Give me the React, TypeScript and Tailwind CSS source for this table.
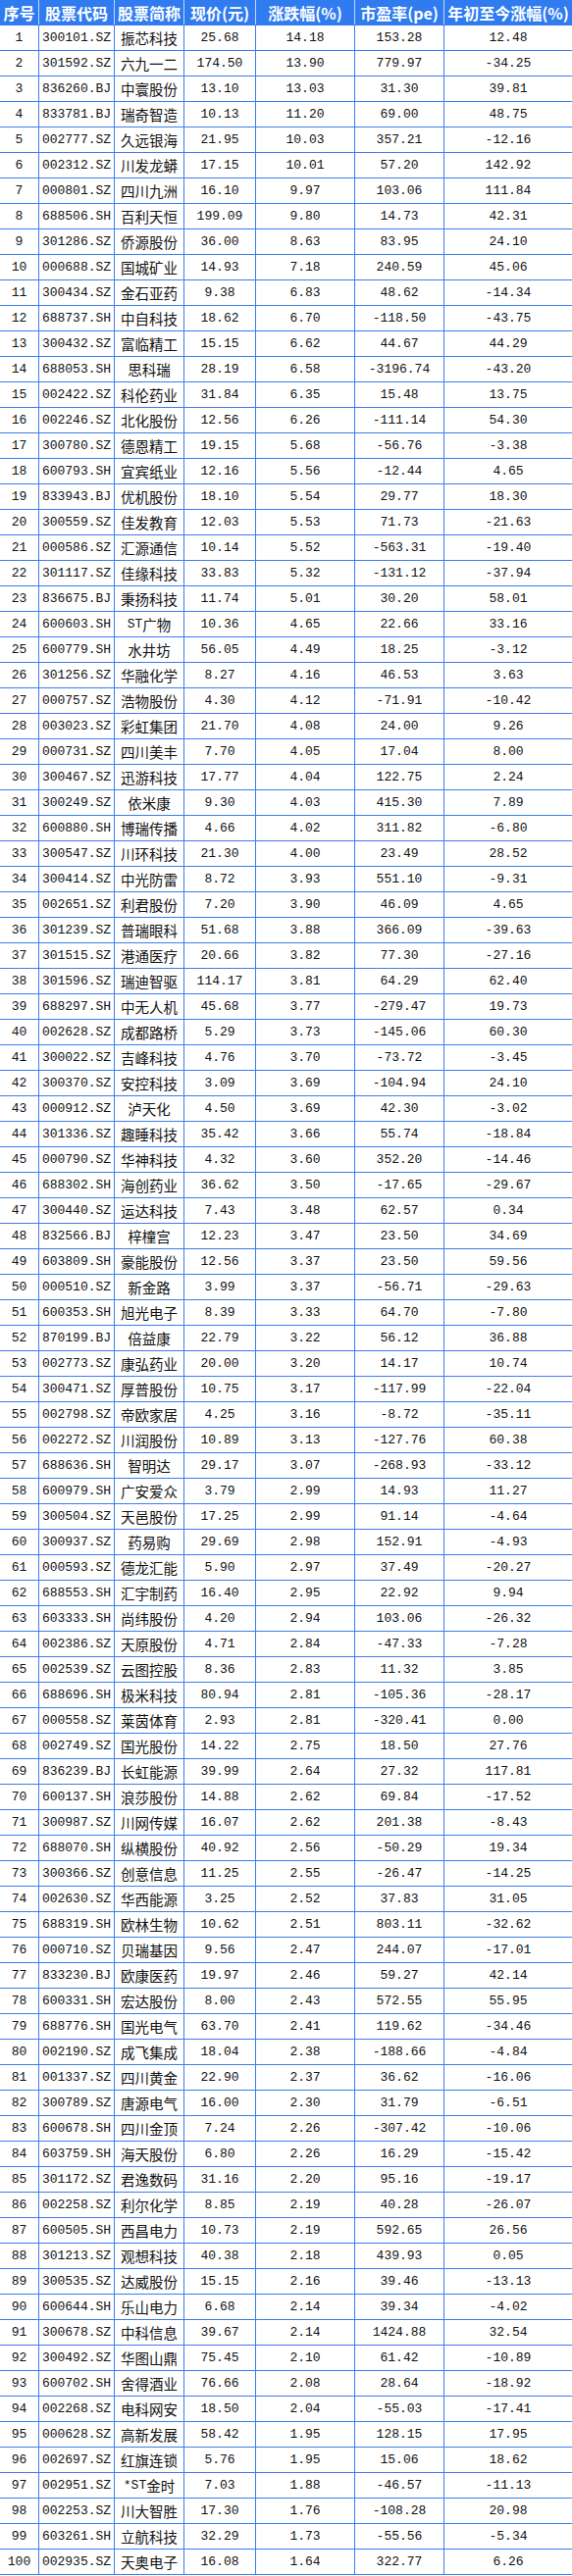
import React from "react";

// code|name|price|chg|pe|ytd
const raw = `300101.SZ|振芯科技|25.68|14.18|153.28|12.48
301592.SZ|六九一二|174.50|13.90|779.97|-34.25
836260.BJ|中寰股份|13.10|13.03|31.30|39.81
833781.BJ|瑞奇智造|10.13|11.20|69.00|48.75
002777.SZ|久远银海|21.95|10.03|357.21|-12.16
002312.SZ|川发龙蟒|17.15|10.01|57.20|142.92
000801.SZ|四川九洲|16.10|9.97|103.06|111.84
688506.SH|百利天恒|199.09|9.80|14.73|42.31
301286.SZ|侨源股份|36.00|8.63|83.95|24.10
000688.SZ|国城矿业|14.93|7.18|240.59|45.06
300434.SZ|金石亚药|9.38|6.83|48.62|-14.34
688737.SH|中自科技|18.62|6.70|-118.50|-43.75
300432.SZ|富临精工|15.15|6.62|44.67|44.29
688053.SH|思科瑞|28.19|6.58|-3196.74|-43.20
002422.SZ|科伦药业|31.84|6.35|15.48|13.75
002246.SZ|北化股份|12.56|6.26|-111.14|54.30
300780.SZ|德恩精工|19.15|5.68|-56.76|-3.38
600793.SH|宜宾纸业|12.16|5.56|-12.44|4.65
833943.BJ|优机股份|18.10|5.54|29.77|18.30
300559.SZ|佳发教育|12.03|5.53|71.73|-21.63
000586.SZ|汇源通信|10.14|5.52|-563.31|-19.40
301117.SZ|佳缘科技|33.83|5.32|-131.12|-37.94
836675.BJ|秉扬科技|11.74|5.01|30.20|58.01
600603.SH|ST广物|10.36|4.65|22.66|33.16
600779.SH|水井坊|56.05|4.49|18.25|-3.12
301256.SZ|华融化学|8.27|4.16|46.53|3.63
000757.SZ|浩物股份|4.30|4.12|-71.91|-10.42
003023.SZ|彩虹集团|21.70|4.08|24.00|9.26
000731.SZ|四川美丰|7.70|4.05|17.04|8.00
300467.SZ|迅游科技|17.77|4.04|122.75|2.24
300249.SZ|依米康|9.30|4.03|415.30|7.89
600880.SH|博瑞传播|4.66|4.02|311.82|-6.80
300547.SZ|川环科技|21.30|4.00|23.49|28.52
300414.SZ|中光防雷|8.72|3.93|551.10|-9.31
002651.SZ|利君股份|7.20|3.90|46.09|4.65
301239.SZ|普瑞眼科|51.68|3.88|366.09|-39.63
301515.SZ|港通医疗|20.66|3.82|77.30|-27.16
301596.SZ|瑞迪智驱|114.17|3.81|64.29|62.40
688297.SH|中无人机|45.68|3.77|-279.47|19.73
002628.SZ|成都路桥|5.29|3.73|-145.06|60.30
300022.SZ|吉峰科技|4.76|3.70|-73.72|-3.45
300370.SZ|安控科技|3.09|3.69|-104.94|24.10
000912.SZ|泸天化|4.50|3.69|42.30|-3.02
301336.SZ|趣睡科技|35.42|3.66|55.74|-18.84
000790.SZ|华神科技|4.32|3.60|352.20|-14.46
688302.SH|海创药业|36.62|3.50|-17.65|-29.67
300440.SZ|运达科技|7.43|3.48|62.57|0.34
832566.BJ|梓橦宫|12.23|3.47|23.50|34.69
603809.SH|豪能股份|12.56|3.37|23.50|59.56
000510.SZ|新金路|3.99|3.37|-56.71|-29.63
600353.SH|旭光电子|8.39|3.33|64.70|-7.80
870199.BJ|倍益康|22.79|3.22|56.12|36.88
002773.SZ|康弘药业|20.00|3.20|14.17|10.74
300471.SZ|厚普股份|10.75|3.17|-117.99|-22.04
002798.SZ|帝欧家居|4.25|3.16|-8.72|-35.11
002272.SZ|川润股份|10.89|3.13|-127.76|60.38
688636.SH|智明达|29.17|3.07|-268.93|-33.12
600979.SH|广安爱众|3.79|2.99|14.93|11.27
300504.SZ|天邑股份|17.25|2.99|91.14|-4.64
300937.SZ|药易购|29.69|2.98|152.91|-4.93
000593.SZ|德龙汇能|5.90|2.97|37.49|-20.27
688553.SH|汇宇制药|16.40|2.95|22.92|9.94
603333.SH|尚纬股份|4.20|2.94|103.06|-26.32
002386.SZ|天原股份|4.71|2.84|-47.33|-7.28
002539.SZ|云图控股|8.36|2.83|11.32|3.85
688696.SH|极米科技|80.94|2.81|-105.36|-28.17
000558.SZ|莱茵体育|2.93|2.81|-320.41|0.00
002749.SZ|国光股份|14.22|2.75|18.50|27.76
836239.BJ|长虹能源|39.99|2.64|27.32|117.81
600137.SH|浪莎股份|14.88|2.62|69.84|-17.52
300987.SZ|川网传媒|16.07|2.62|201.38|-8.43
688070.SH|纵横股份|40.92|2.56|-50.29|19.34
300366.SZ|创意信息|11.25|2.55|-26.47|-14.25
002630.SZ|华西能源|3.25|2.52|37.83|31.05
688319.SH|欧林生物|10.62|2.51|803.11|-32.62
000710.SZ|贝瑞基因|9.56|2.47|244.07|-17.01
833230.BJ|欧康医药|19.97|2.46|59.27|42.14
600331.SH|宏达股份|8.00|2.43|572.55|55.95
688776.SH|国光电气|63.70|2.41|119.62|-34.46
002190.SZ|成飞集成|18.04|2.38|-188.66|-4.84
001337.SZ|四川黄金|22.90|2.37|36.62|-16.06
300789.SZ|唐源电气|16.00|2.30|31.79|-6.51
600678.SH|四川金顶|7.24|2.26|-307.42|-10.06
603759.SH|海天股份|6.80|2.26|16.29|-15.42
301172.SZ|君逸数码|31.16|2.20|95.16|-19.17
002258.SZ|利尔化学|8.85|2.19|40.28|-26.07
600505.SH|西昌电力|10.73|2.19|592.65|26.56
301213.SZ|观想科技|40.38|2.18|439.93|0.05
300535.SZ|达威股份|15.15|2.16|39.46|-13.13
600644.SH|乐山电力|6.68|2.14|39.34|-4.02
300678.SZ|中科信息|39.67|2.14|1424.88|32.54
300492.SZ|华图山鼎|75.45|2.10|61.42|-10.89
600702.SH|舍得酒业|76.66|2.08|28.64|-18.92
002268.SZ|电科网安|18.50|2.04|-55.03|-17.41
000628.SZ|高新发展|58.42|1.95|128.15|17.95
002697.SZ|红旗连锁|5.76|1.95|15.06|18.62
002951.SZ|*ST金时|7.03|1.88|-46.57|-11.13
002253.SZ|川大智胜|17.30|1.76|-108.28|20.98
603261.SH|立航科技|32.29|1.73|-55.56|-5.34
002935.SZ|天奥电子|16.08|1.64|322.77|6.26`;

const rows = raw.split("\n").map((line) => line.split("|"));

const headers = ["序号", "股票代码", "股票简称", "现价(元)", "涨跌幅(%)", "市盈率(pe)", "年初至今涨幅(%)"];

const grid = "grid grid-cols-[40px_77px_71px_73px_101px_91px_130px]";
const cell = "flex items-center justify-center border-r border-[#3a7cf0] last:border-r-0 overflow-hidden whitespace-nowrap";
const mono = "font-['Liberation_Mono','Noto_Sans_CJK_SC',monospace] text-[13px]";
const cjk = "font-['Noto_Sans_CJK_SC','Liberation_Sans',sans-serif] text-[14.5px]";

export default function App() {
  return (
    <div className="w-[583px] bg-white text-[#111]">
      {/* header */}
      <div className={`${grid} h-[26px] bg-[#2f7bef] border-b border-[#3a7cf0]`}>
        {headers.map((h) => (
          <div
            key={h}
            className={`${cell} border-white/70 font-['Noto_Sans_CJK_SC',sans-serif] text-[16px] font-bold text-white`}
          >
            {h}
          </div>
        ))}
      </div>

      {rows.map((r, i) => (
        <div key={r[0]} className={`${grid} h-[26px] border-b border-[#3a7cf0]`}>
          <div className={`${cell} ${mono}`}>{i + 1}</div>
          <div className={`${cell} ${mono}`}>{r[0]}</div>
          <div className={`${cell} ${cjk}`}>
            {r[1].startsWith("*ST") || r[1].startsWith("ST") ? (
              <>
                <span className={mono}>{r[1].replace(/[^*ST]/g, "")}</span>
                {r[1].replace(/[*ST]/g, "")}
              </>
            ) : (
              r[1]
            )}
          </div>
          <div className={`${cell} ${mono}`}>{r[2]}</div>
          <div className={`${cell} ${mono}`}>{r[3]}</div>
          <div className={`${cell} ${mono}`}>{r[4]}</div>
          <div className={`${cell} ${mono}`}>{r[5]}</div>
        </div>
      ))}
    </div>
  );
}
